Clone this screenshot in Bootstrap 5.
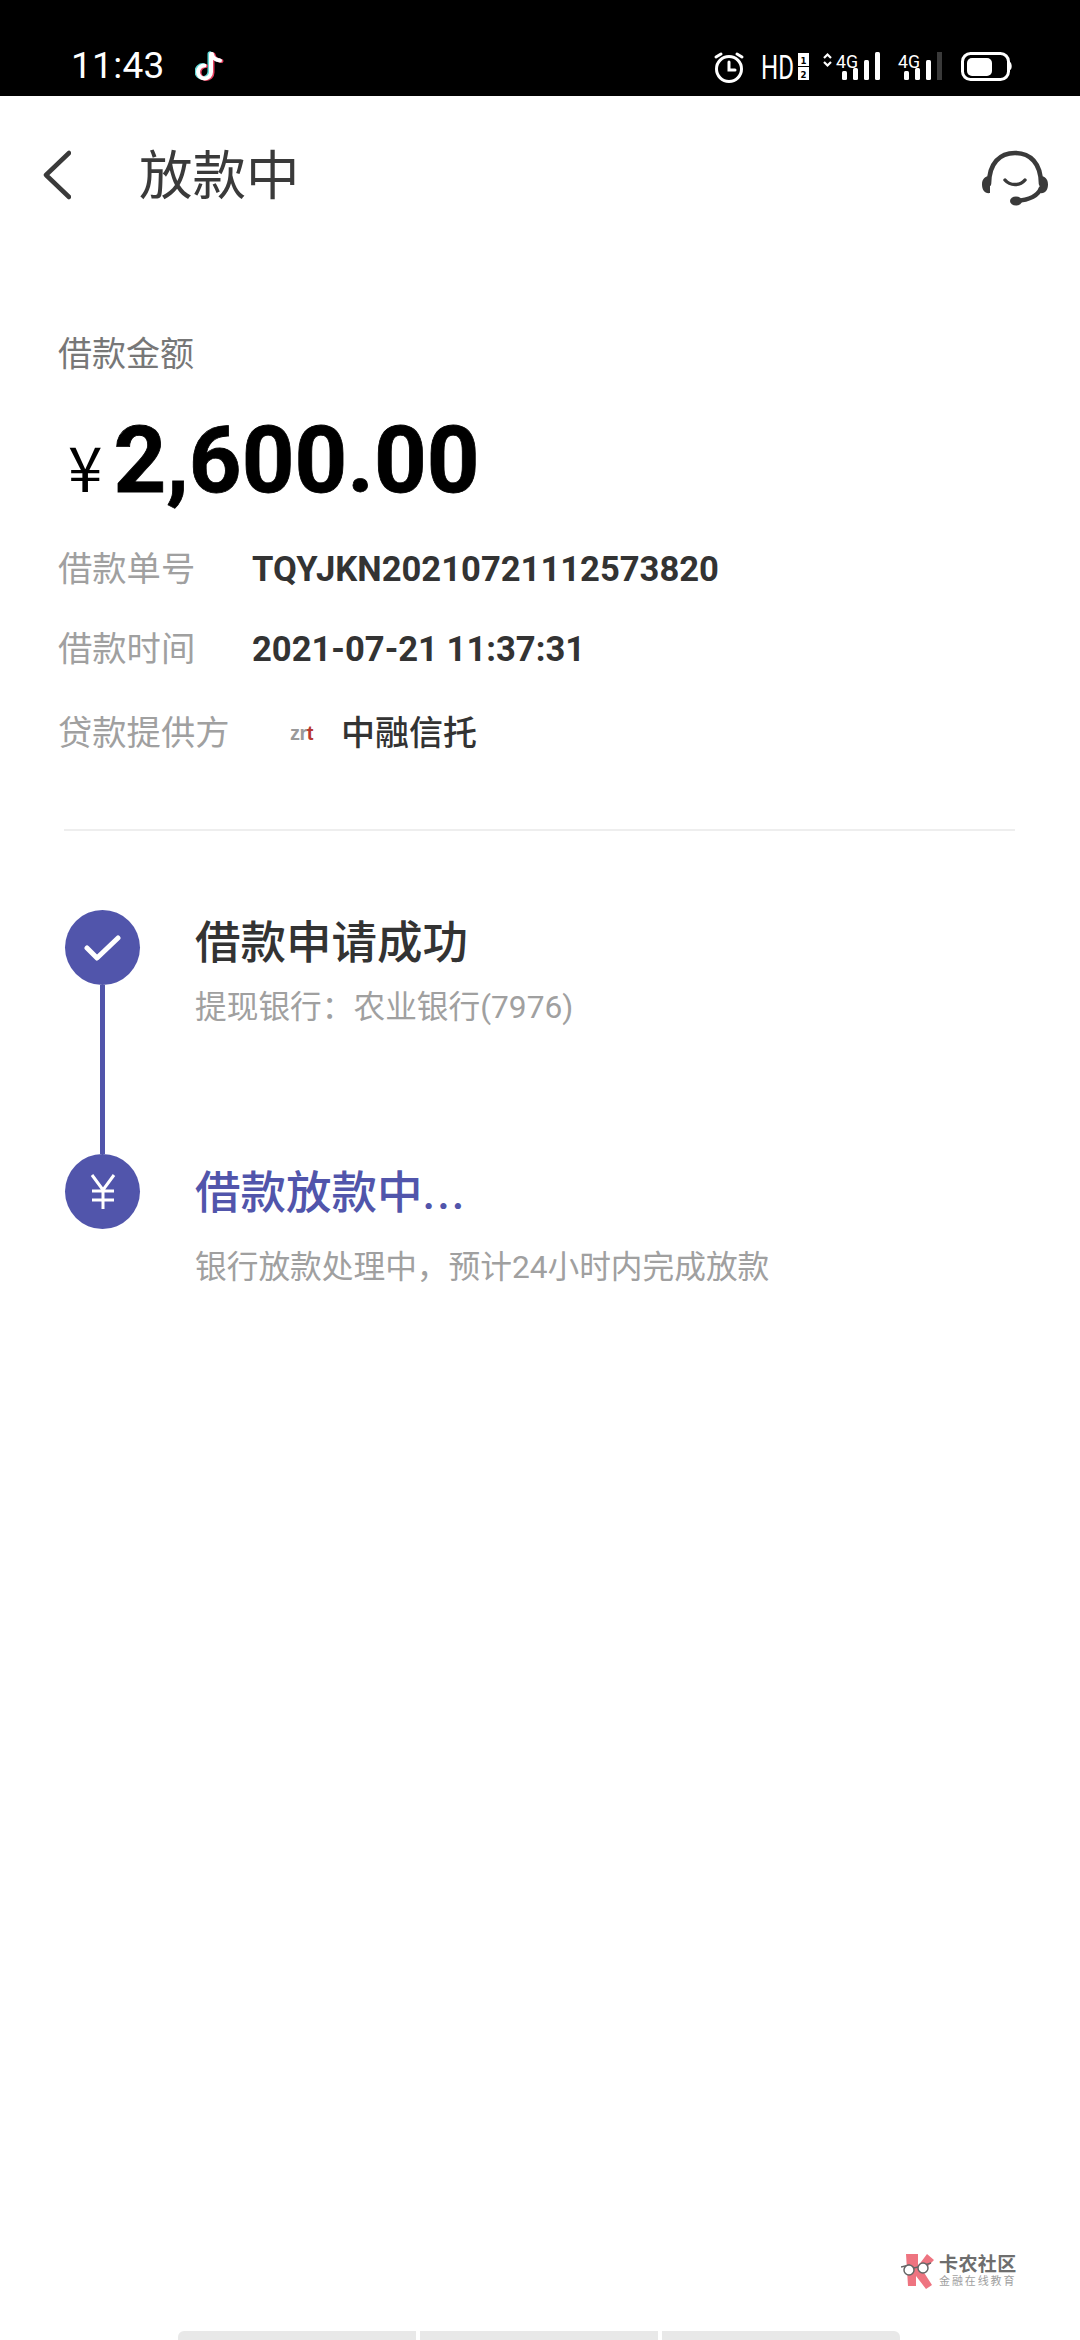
<!DOCTYPE html>
<html lang="zh">
<head>
<meta charset="utf-8">
<title>放款中</title>
<link href="https://cdn.jsdelivr.net/npm/bootstrap@5.3.0/dist/css/bootstrap.min.css" rel="stylesheet">
<style>
html,body{margin:0;background:#fff}
body{width:1080px;height:2340px;overflow:hidden;font-family:Roboto,"Noto Sans CJK SC",sans-serif;color:#333}
.phone{height:2340px;overflow:hidden}
.sbar{height:96px;background:#000;color:#fff;padding:0 66px 0 71px}
.clock{font-size:37px;line-height:44px;font-weight:400;letter-spacing:.3px;margin-top:44px}
.tok{margin:50px 0 0 30px}
.sright{margin-top:52px;overflow:visible}
.apphead{height:158px;padding:0 31px 0 43px}
.chev{width:28px;height:50px}
.ttl{font-size:53.500px;line-height:60px;font-weight:400;margin:4px 0 0 68px;color:#3a3a3a}
.hs{width:68px;height:56px;margin-top:6px}
.info{padding:0 58px;}
.amt-label{font-size:34px;line-height:44px;color:#777;margin-top:78px}
.amt{margin:35px 0 0 10px;line-height:100px;color:#000;font-weight:700;font-size:92px;-webkit-text-stroke:.8px #000}
.yen{font-size:62px;font-weight:400;margin-right:11px;font-family:"Noto Sans CJK SC",sans-serif;-webkit-text-stroke:0}
.kv{height:80px}
.kv-first{margin-top:14px}
.kv-gap{margin-top:4px}
.kv-k{width:194px;font-size:34.300px;color:#a0a0a0;line-height:44px}
.kv-v{font-size:34.600px;font-weight:700;color:#333;line-height:44px}
.prov{margin-left:38px;font-size:34px;line-height:44px;font-weight:500;color:#333}
.zrt{font-size:20px;font-weight:700;color:#9a9a9a;width:34px;margin-right:17px;letter-spacing:-.5px;font-family:"Liberation Sans",sans-serif}
.zrt b{color:#b8392f}
.rule{height:2px;background:#eee;margin:56px 65px 0 64px}
.tl{padding:79px 0 0 65px}
.stepc{width:75px;height:75px;border-radius:50%;background:#5155ab}
.stepl{width:5px;height:169px;background:#5155ab}
.lcol{width:75px;margin-right:55px}
.stp-t{font-size:45.500px;line-height:58px;font-weight:500;color:#333;margin-top:5px}
.stp-s{font-size:31.700px;line-height:40px;color:#a0a0a0;margin-top:15px}
.stp-a{color:#5155ab;margin-top:11px}
.stp-a + .stp-s{margin-top:25px}
.dots{letter-spacing:2px}
.wm{position:absolute;left:901px;top:2253px}
.wm-a{font-size:19px;line-height:21px;font-weight:700;color:#6e6e6e;letter-spacing:.4px}
.wm-b{font-size:11px;line-height:14px;color:#a0a0a0;letter-spacing:1.900px}
.navb{position:absolute;left:178px;top:2331px;width:722px;height:9px}
.navb i{display:block;height:9px;background:#e8e8e8;flex:1}
.navb i:first-child{border-radius:6px 0 0 0}
.navb i:last-child{border-radius:0 6px 0 0}
</style>
</head>
<body>
<div class="phone position-relative">
  <div class="sbar d-flex justify-content-between align-items-start">
    <div class="d-flex align-items-start">
      <span class="clock">11:43</span>
      <svg class="tok" width="30" height="32" viewBox="0 0 30 32"><g fill="none" stroke-width="4" stroke-linecap="round"><path d="M16 4v18a6.500 6.500 0 1 1-6.500-6.500M17 4c.7 4 3.500 6 8 6.500" stroke="#5fd8d8" transform="translate(-1.500 -.5)"/><path d="M16 4v18a6.500 6.500 0 1 1-6.500-6.500M17 4c.7 4 3.500 6 8 6.500" stroke="#e8405f" transform="translate(1.500 .5)"/><path d="M16 4v18a6.500 6.500 0 1 1-6.500-6.500M17 4c.7 4 3.500 6 8 6.500" stroke="#fff"/></g></svg>
    </div>
    <svg class="sright" width="300" height="40" viewBox="0 0 300 40" font-family="'DejaVu Sans',sans-serif" fill="#fff">
      <g fill="none" stroke="#fff" stroke-width="3" stroke-linecap="round"><circle cx="15" cy="17" r="12.500"/><path d="M15 10v8h6M2 5l5-3M28 5l-5-3"/></g>
      <text x="47" y="27" font-family="Roboto,sans-serif" font-size="34" textLength="33" lengthAdjust="spacingAndGlyphs">HD</text>
      <rect x="84" y="1" width="11" height="13"/><rect x="84" y="15" width="11" height="13"/>
      <text x="86.500" y="11.500" font-size="9.500" font-weight="700" fill="#000" textLength="6" lengthAdjust="spacingAndGlyphs">1</text>
      <text x="86.500" y="25.500" font-size="9.500" font-weight="700" fill="#000" textLength="6" lengthAdjust="spacingAndGlyphs">2</text>
      <path d="M110 6l3.500-3.500L117 6M110 10l3.500 3.500L117 10" fill="none" stroke="#fff" stroke-width="2.200"/>
      <text x="122" y="16" font-family="Roboto,sans-serif" font-size="19" textLength="22" lengthAdjust="spacingAndGlyphs">4G</text>
      <rect x="128" y="19" width="5" height="9" rx="1.500"/><rect x="139" y="16" width="5" height="12" rx="1.500"/><rect x="150" y="8" width="5" height="20" rx="1.500"/><rect x="161" y="0" width="5" height="28" rx="1.500"/>
      <text x="184" y="16" font-family="Roboto,sans-serif" font-size="19" textLength="22" lengthAdjust="spacingAndGlyphs">4G</text>
      <rect x="190" y="19" width="5" height="9" rx="1.500"/><rect x="201" y="16" width="5" height="12" rx="1.500"/><rect x="212" y="8" width="5" height="20" rx="1.500"/><rect x="223" y="0" width="5" height="28" fill="#3a3a3a"/>
      <rect x="248.500" y="1.500" width="46" height="26" rx="8" fill="none" stroke="#fff" stroke-width="3"/>
      <rect x="253" y="6" width="25" height="18" rx="5"/>
      <path d="M296 10c2 1 2.500 7 0 8z"/>
    </svg>
  </div>

  <header class="apphead d-flex align-items-center">
    <svg class="chev flex-shrink-0" viewBox="0 0 28 50"><path d="M26 3L3 25l23 22" fill="none" stroke="#3a3a3a" stroke-width="4.500" stroke-linecap="round" stroke-linejoin="round"/></svg>
    <h1 class="ttl">放款中</h1>
    <svg class="hs ms-auto" viewBox="0 0 68 56"><g fill="none" stroke="#3a3a3a" stroke-width="4.500" stroke-linecap="round"><path d="M8 34C8 13 19 3 34 3s26 10 26 31"/><path d="M24 30c5 6 15 6 20 0" stroke-width="3.500"/><path d="M60 38c-3 8-12 12-25 13"/></g><path d="M9 26v17c-5 1-8-3-8-8.500S4 26 9 26zM59 26v17c5 1 8-3 8-8.500S64 26 59 26z" fill="#3a3a3a"/><ellipse cx="35" cy="51" rx="6" ry="4.500" fill="#3a3a3a"/></svg>
  </header>

  <section class="info">
    <div class="amt-label">借款金额</div>
    <div class="amt d-flex align-items-baseline"><span class="yen">¥</span><span>2,600.00</span></div>
    <div class="kv kv-first d-flex align-items-center"><span class="kv-k">借款单号</span><span class="kv-v">TQYJKN20210721112573820</span></div>
    <div class="kv d-flex align-items-center"><span class="kv-k">借款时间</span><span class="kv-v">2021-07-21 11:37:31</span></div>
    <div class="kv kv-gap d-flex align-items-center"><span class="kv-k">贷款提供方</span><span class="prov d-flex align-items-center"><span class="zrt">zr<b>t</b></span>中融信托</span></div>
  </section>
  <div class="rule"></div>

  <section class="tl">
    <div class="d-flex">
      <div class="lcol d-flex flex-column align-items-center flex-shrink-0">
        <div class="stepc d-flex align-items-center justify-content-center"><svg width="38" height="30" viewBox="0 0 38 30"><path d="M3 15l10 10L34 5" fill="none" stroke="#fff" stroke-width="5" stroke-linecap="round" stroke-linejoin="round"/></svg></div>
        <div class="stepl"></div>
      </div>
      <div><div class="stp-t">借款申请成功</div><div class="stp-s">提现银行：农业银行(7976)</div></div>
    </div>
    <div class="d-flex">
      <div class="lcol d-flex flex-column align-items-center flex-shrink-0">
        <div class="stepc d-flex align-items-center justify-content-center"><svg width="28" height="38" viewBox="0 0 28 38"><path d="M3 2l11 15L25 2M14 17v19M3 18h22M3 27h22" fill="none" stroke="#fff" stroke-width="3"/></svg></div>
      </div>
      <div><div class="stp-t stp-a">借款放款中<span class="dots">...</span></div><div class="stp-s">银行放款处理中，预计24小时内完成放款</div></div>
    </div>
  </section>

  <div class="wm d-flex align-items-center gap-1">
    <svg width="34" height="36" viewBox="0 0 34 36" class="flex-shrink-0"><path d="M5 1h12v12l9-12 7 6-11 11 9 14-6 4-10-13v10H7z" fill="#ee7480"/><path d="M0 14l8-2 5 3 8-2 9-3" fill="none" stroke="#666" stroke-width="1.500"/><circle cx="8" cy="17" r="5" fill="#fff" stroke="#666" stroke-width="1.500"/><circle cx="22" cy="15" r="5" fill="#fff" stroke="#666" stroke-width="1.500"/></svg>
    <div><div class="wm-a">卡农社区</div><div class="wm-b">金融在线教育</div></div>
  </div>

  <div class="navb d-flex gap-1"><i></i><i></i><i></i></div>
</div>
</body>
</html>
